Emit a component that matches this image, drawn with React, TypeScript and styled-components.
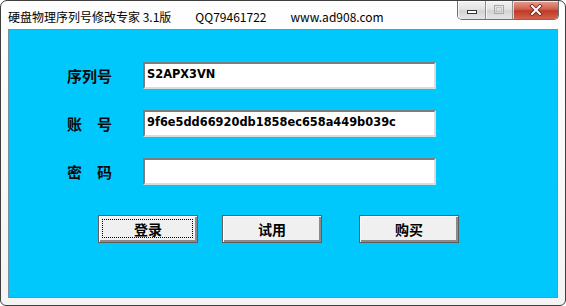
import styled, { createGlobalStyle } from 'styled-components';

const GlobalStyle = createGlobalStyle`
  html, body {
    margin: 0;
    padding: 0;
    background: #ffffff;
    overflow: hidden;
  }
  * { box-sizing: border-box; }
`;

const Window = styled.div`
  width: 566px;
  height: 306px;
  border: 1px solid #3e3e3e;
  border-radius: 7px 7px 6px 6px;
  background: linear-gradient(#fefefe, #f4f4f4);
  display: flex;
  flex-direction: column;
  overflow: hidden;
  font-family: "Noto Sans CJK SC", "Noto Sans", sans-serif;
`;

const TitleBar = styled.div`
  height: 28px;
  display: flex;
  align-items: flex-start;
  padding-left: 7px;
  flex-shrink: 0;
`;

const TitleText = styled.div`
  display: flex;
  align-items: center;
  height: 28px;
  padding-top: 2px;
  font-size: 12px;
  color: #000;
  white-space: pre;
`;

const TitlePart = styled.span<{ $gap?: number }>`
  margin-left: ${({ $gap }) => $gap ?? 0}px;
`;

const CaptionButtons = styled.div`
  display: flex;
  margin-left: auto;
  margin-right: 6px;
  height: 19px;
  border: 1px solid #6f6f6f;
  border-top: none;
  border-radius: 0 0 5px 5px;
  overflow: hidden;
`;

const CaptionBtn = styled.div<{ $w: number; $close?: boolean }>`
  width: ${({ $w }) => $w}px;
  height: 100%;
  display: flex;
  align-items: center;
  justify-content: center;
  background: ${({ $close }) =>
    $close
      ? 'linear-gradient(#e8a093 0%, #d0604d 45%, #c13a25 55%, #d1624f 100%)'
      : 'linear-gradient(#f3f3f3 0%, #e2e2e2 45%, #d3d3d3 55%, #e6e6e6 100%)'};
  box-shadow: inset 1px 1px 0 rgba(255, 255, 255, 0.7);
  & + & {
    border-left: 1px solid #8c8c8c;
  }
`;

const Client = styled.div`
  flex: 1;
  margin: 0 7px 7px 7px;
  background: #00c8fc;
  border: 1px solid #6f93a3;
  padding: 32px 0 0 58px;
`;

const Form = styled.div`
  display: grid;
  grid-template-columns: 45px 293px;
  column-gap: 31px;
  row-gap: 21px;
  align-items: center;
`;

const Label = styled.div`
  display: flex;
  justify-content: space-between;
  font-family: "Noto Sans CJK SC", sans-serif;
  font-weight: 700;
  font-size: 15px;
  color: #0a0a0a;
  line-height: 1;
`;

const Field = styled.div`
  height: 27px;
  background: #ffffff;
  border-top: 2px solid #7c7c7c;
  border-left: 2px solid #7c7c7c;
  border-right: 2px solid #dcdcdc;
  border-bottom: 2px solid #dcdcdc;
  padding: 2px 0 0 2px;
  font-family: "DejaVu Sans", sans-serif;
  font-weight: 700;
  font-size: 11.4px;
  color: #000;
  line-height: 16px;
  white-space: nowrap;
`;

const ButtonRow = styled.div`
  display: flex;
  margin-top: 30px;
  padding-left: 31px;
`;

const Button = styled.div<{ $offset?: number; $focused?: boolean }>`
  position: relative;
  width: 100px;
  height: 28px;
  margin-left: ${({ $offset }) => $offset ?? 0}px;
  background: #f0f0f0;
  border: 1px solid #5e5e5e;
  box-shadow: inset 1px 1px 0 #ffffff, inset -2px -2px 0 #8a8a8a;
  display: flex;
  align-items: center;
  justify-content: center;
  font-family: "Noto Sans CJK SC", sans-serif;
  font-weight: 700;
  font-size: 14px;
  color: #000;
  padding-bottom: 1px;
  &::after {
    content: '';
    display: ${({ $focused }) => ($focused ? 'block' : 'none')};
    position: absolute;
    inset: 3px 4px 4px 3px;
    border: 1px dotted #000;
  }
`;

function MinIcon() {
  return (
    <svg width="14" height="10" viewBox="0 0 14 10">
      <rect x="2.5" y="5.5" width="9" height="3" fill="#ffffff" stroke="#353535" />
    </svg>
  );
}

function MaxIcon() {
  return (
    <svg width="12" height="10" viewBox="0 0 12 10">
      <rect x="1.5" y="0.5" width="9" height="8" fill="none" stroke="#a9a9a9" />
      <rect x="3.5" y="2.5" width="5" height="4" fill="none" stroke="#c4c4c4" />
    </svg>
  );
}

function CloseIcon() {
  return (
    <svg width="16" height="12" viewBox="0 0 16 12">
      <path d="M4 2 L12 10 M12 2 L4 10" stroke="#6b1f14" strokeWidth="3.6" strokeLinecap="square" />
      <path d="M4 2 L12 10 M12 2 L4 10" stroke="#ffffff" strokeWidth="2" strokeLinecap="square" />
    </svg>
  );
}

export default function App() {
  return (
    <>
      <GlobalStyle />
      <Window>
        <TitleBar>
          <TitleText>
            <TitlePart>硬盘物理序列号修改专家 3.1版</TitlePart>
            <TitlePart $gap={24}>QQ79461722</TitlePart>
            <TitlePart $gap={24}>www.ad908.com</TitlePart>
          </TitleText>
          <CaptionButtons>
            <CaptionBtn $w={27}>
              <MinIcon />
            </CaptionBtn>
            <CaptionBtn $w={27}>
              <MaxIcon />
            </CaptionBtn>
            <CaptionBtn $w={46} $close>
              <CloseIcon />
            </CaptionBtn>
          </CaptionButtons>
        </TitleBar>
        <Client>
          <Form>
            <Label>
              <span>序列号</span>
            </Label>
            <Field>S2APX3VN</Field>
            <Label>
              <span>账</span>
              <span>号</span>
            </Label>
            <Field>9f6e5dd66920db1858ec658a449b039c</Field>
            <Label>
              <span>密</span>
              <span>码</span>
            </Label>
            <Field />
          </Form>
          <ButtonRow>
            <Button $focused>登录</Button>
            <Button $offset={24}>试用</Button>
            <Button $offset={37}>购买</Button>
          </ButtonRow>
        </Client>
      </Window>
    </>
  );
}
